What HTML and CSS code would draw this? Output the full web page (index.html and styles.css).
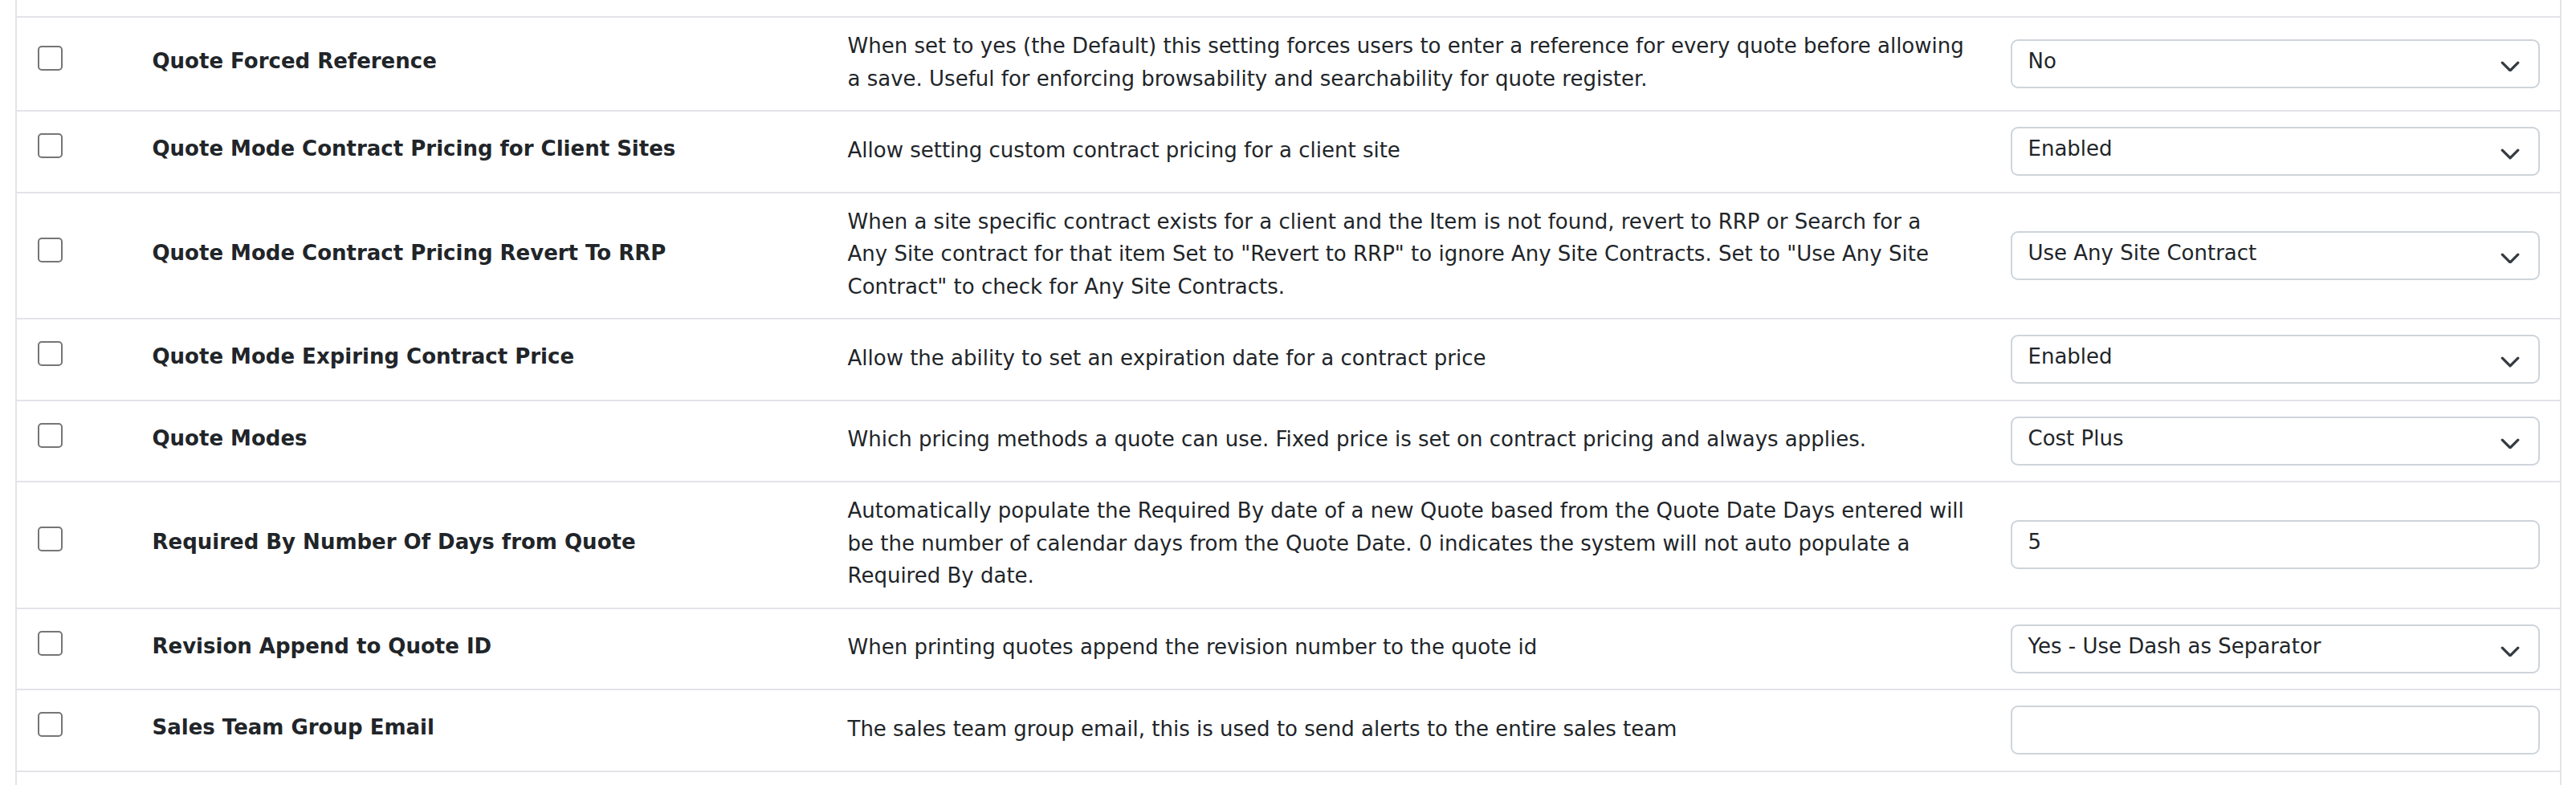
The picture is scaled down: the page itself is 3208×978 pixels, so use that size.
FILE: index.html
```html
<!DOCTYPE html>
<html lang="en">
<head>
<meta charset="utf-8">
<title>Quote Settings</title>
<link rel="stylesheet" href="styles.css">
</head>
<body>
<div class="table">
  <div class="row row-partial-top"></div>

  <div class="row">
    <div class="cell cell-check"><span class="checkbox"></span></div>
    <div class="cell cell-label">Quote Forced Reference</div>
    <div class="cell cell-desc">When set to yes (the Default) this setting forces users to enter a reference for every quote before allowing a save. Useful for enforcing browsability and searchability for quote register.</div>
    <div class="cell cell-control"><div class="select"><span class="value">No</span><svg class="chev" viewBox="0 0 16 12" width="26" height="19.5"><path d="M2 5l6 6 6-6" fill="none" stroke="#343a40" stroke-width="2" stroke-linecap="round" stroke-linejoin="round"/></svg></div></div>
  </div>

  <div class="row">
    <div class="cell cell-check"><span class="checkbox"></span></div>
    <div class="cell cell-label">Quote Mode Contract Pricing for Client Sites</div>
    <div class="cell cell-desc">Allow setting custom contract pricing for a client site</div>
    <div class="cell cell-control"><div class="select"><span class="value">Enabled</span><svg class="chev" viewBox="0 0 16 12" width="26" height="19.5"><path d="M2 5l6 6 6-6" fill="none" stroke="#343a40" stroke-width="2" stroke-linecap="round" stroke-linejoin="round"/></svg></div></div>
  </div>

  <div class="row">
    <div class="cell cell-check"><span class="checkbox"></span></div>
    <div class="cell cell-label">Quote Mode Contract Pricing Revert To RRP</div>
    <div class="cell cell-desc">When a site specific contract exists for a client and the Item is not found, revert to RRP or Search for a Any Site contract for that item Set to "Revert to RRP" to ignore Any Site Contracts. Set to "Use Any Site Contract" to check for Any Site Contracts.</div>
    <div class="cell cell-control"><div class="select"><span class="value">Use Any Site Contract</span><svg class="chev" viewBox="0 0 16 12" width="26" height="19.5"><path d="M2 5l6 6 6-6" fill="none" stroke="#343a40" stroke-width="2" stroke-linecap="round" stroke-linejoin="round"/></svg></div></div>
  </div>

  <div class="row">
    <div class="cell cell-check"><span class="checkbox"></span></div>
    <div class="cell cell-label">Quote Mode Expiring Contract Price</div>
    <div class="cell cell-desc">Allow the ability to set an expiration date for a contract price</div>
    <div class="cell cell-control"><div class="select"><span class="value">Enabled</span><svg class="chev" viewBox="0 0 16 12" width="26" height="19.5"><path d="M2 5l6 6 6-6" fill="none" stroke="#343a40" stroke-width="2" stroke-linecap="round" stroke-linejoin="round"/></svg></div></div>
  </div>

  <div class="row">
    <div class="cell cell-check"><span class="checkbox"></span></div>
    <div class="cell cell-label">Quote Modes</div>
    <div class="cell cell-desc">Which pricing methods a quote can use. Fixed price is set on contract pricing and always applies.</div>
    <div class="cell cell-control"><div class="select"><span class="value">Cost Plus</span><svg class="chev" viewBox="0 0 16 12" width="26" height="19.5"><path d="M2 5l6 6 6-6" fill="none" stroke="#343a40" stroke-width="2" stroke-linecap="round" stroke-linejoin="round"/></svg></div></div>
  </div>

  <div class="row">
    <div class="cell cell-check"><span class="checkbox"></span></div>
    <div class="cell cell-label">Required By Number Of Days from Quote</div>
    <div class="cell cell-desc">Automatically populate the Required By date of a new Quote based from the Quote Date Days entered will be the number of calendar days from the Quote Date. 0 indicates the system will not auto populate a Required By date.</div>
    <div class="cell cell-control"><div class="input"><span class="value">5</span></div></div>
  </div>

  <div class="row">
    <div class="cell cell-check"><span class="checkbox"></span></div>
    <div class="cell cell-label">Revision Append to Quote ID</div>
    <div class="cell cell-desc">When printing quotes append the revision number to the quote id</div>
    <div class="cell cell-control"><div class="select"><span class="value">Yes - Use Dash as Separator</span><svg class="chev" viewBox="0 0 16 12" width="26" height="19.5"><path d="M2 5l6 6 6-6" fill="none" stroke="#343a40" stroke-width="2" stroke-linecap="round" stroke-linejoin="round"/></svg></div></div>
  </div>

  <div class="row">
    <div class="cell cell-check"><span class="checkbox"></span></div>
    <div class="cell cell-label">Sales Team Group Email</div>
    <div class="cell cell-desc">The sales team group email, this is used to send alerts to the entire sales team</div>
    <div class="cell cell-control"><div class="input"><span class="value"></span></div></div>
  </div>

  <div class="row row-partial-bottom"></div>
</div>
</body>
</html>
```

FILE: styles.css
```css
html, body {
  margin: 0;
  padding: 0;
  background: #ffffff;
}

body {
  font-family: "DejaVu Sans", sans-serif;
  font-size: 26px;
  color: #212529;
  overflow: hidden;
}

.table {
  margin-left: 19px;
  width: 3167px;
  border-left: 2px solid #e3e4e8;
  border-right: 2px solid #e3e4e8;
}

.row {
  display: grid;
  grid-template-columns: 149px 866px 1448px 704px;
  min-height: 99.5px;
  border-bottom: 2px solid #e3e4e8;
}

.row-partial-top {
  min-height: 20px;
  height: 20px;
}

.row-partial-bottom {
  min-height: 20px;
  border-bottom: none;
}

.cell {
  display: flex;
  align-items: center;
  padding: 0 19.5px;
  line-height: 40.5px;
}

.cell-check {
  padding-left: 26px;
  padding-bottom: 14px;
}

.checkbox {
  display: block;
  width: 27px;
  height: 27px;
  border: 2px solid #767676;
  border-radius: 5px;
  background: #ffffff;
}

.cell-label {
  font-weight: bold;
  padding-top: 15px;
  padding-bottom: 22px;
}

.cell-desc {
  padding-top: 15px;
  padding-bottom: 19px;
  padding-right: 37px;
}

.cell-control {
  padding-right: 25.5px;
}

.select,
.input {
  box-sizing: border-box;
  width: 100%;
  height: 61px;
  border: 2px solid #ced4da;
  border-radius: 9px;
  background: #ffffff;
  display: flex;
  align-items: center;
  justify-content: space-between;
  padding: 0 22px 0 20px;
  line-height: 39px;
}

.value {
  display: block;
  padding-bottom: 6px;
}

.chev {
  display: block;
  flex: none;
}
```
